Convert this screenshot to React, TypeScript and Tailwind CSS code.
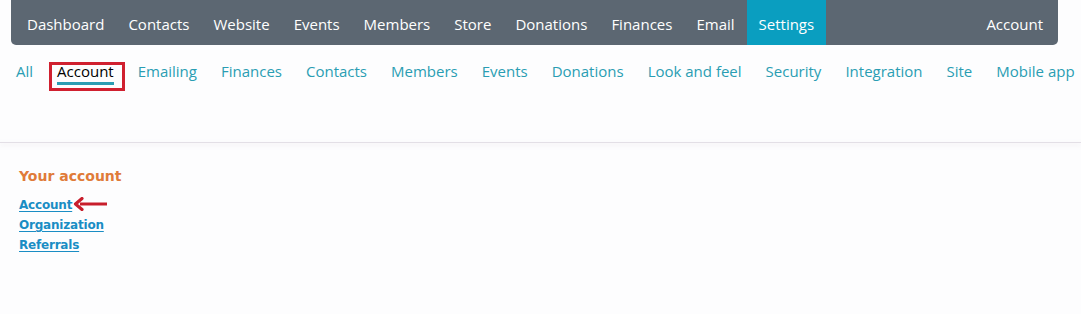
import React from "react";

const topItems = ["Dashboard", "Contacts", "Website", "Events", "Members", "Store", "Donations", "Finances", "Email"];
const subItems = ["Emailing", "Finances", "Contacts", "Members", "Events", "Donations", "Look and feel", "Security", "Integration", "Site", "Mobile app"];

export default function App() {
  return (
    <div className="w-[1081px] h-[314px] overflow-hidden bg-[#fdfdfe]">
      <div className="font-['Open_Sans',sans-serif] text-[15px]">
        <div className="ml-[11px] mr-[23px] h-[45px] bg-[#5c6772] rounded-b-[5px] flex items-stretch text-white">
          <div className="flex items-stretch pl-[4px]">
            {topItems.map((t) => (
              <div key={t} className="px-[12px] pt-[3px] flex items-center">{t}</div>
            ))}
            <div className="px-[12px] pt-[3px] flex items-center bg-[#0a9ec0]">Settings</div>
          </div>
          <div className="ml-auto pr-[15px] pt-[3px] flex items-center">Account</div>
        </div>
        <div className="h-[97px] flex items-start pt-[15px] pl-[16px] gap-[24px] text-[#2a9db3] whitespace-nowrap">
          <div className="leading-[22px]">All</div>
          <div className="relative leading-[22px] text-black">
            <span className="relative z-10 inline-block pb-[1px] border-b-[3px] border-[#2a9db3] leading-[20px]">Account</span>
            <div className="absolute left-[-8px] top-[2px] w-[76px] h-[29px] border-[3px] border-[#d0202f]"></div>
          </div>
          {subItems.map((t) => (
            <div key={t} className="leading-[22px]">{t}</div>
          ))}
        </div>
      </div>
      <div className="h-[1px] bg-[#e3dfe6] shadow-[0_2px_4px_rgba(180,170,190,0.35)]"></div>
      <div className="pt-[23px] pl-[19px] font-['DejaVu_Sans',Verdana,sans-serif]">
        <div className="text-[#e07b39] font-bold text-[14px] leading-[20px]">Your account</div>
        <div className="mt-[9px] flex flex-col text-[12px] font-bold leading-[20px] text-[#1a8dc4] tracking-[-0.2px]">
          <div className="flex items-center">
            <span className="underline underline-offset-2">Account</span>
            <svg width="36" height="14" viewBox="0 0 36 14" className="ml-[1px] mt-[-2px]">
              <path d="M34 7 H7" stroke="#c81e2c" strokeWidth="3" />
              <path d="M9 1.5 L2.5 7 L9 12.5" stroke="#c81e2c" strokeWidth="3.2" fill="none" strokeLinecap="round" strokeLinejoin="round" />
            </svg>
          </div>
          <span className="underline underline-offset-2">Organization</span>
          <span className="underline underline-offset-2">Referrals</span>
        </div>
      </div>
    </div>
  );
}
